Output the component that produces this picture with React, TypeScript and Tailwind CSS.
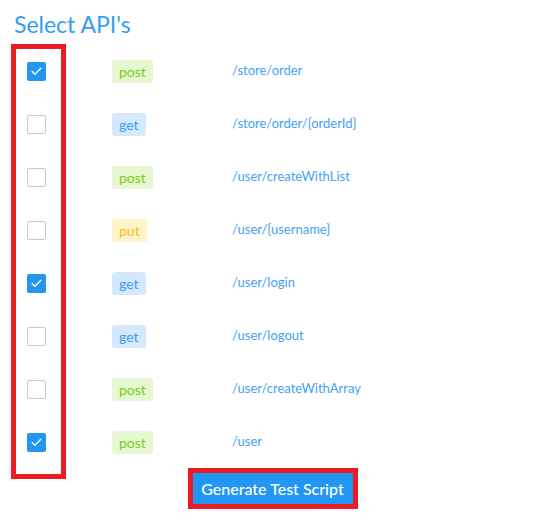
import { Check } from "lucide-react";

type Method = "get" | "post" | "put";

interface ApiRow {
  method: Method;
  path: string;
  checked: boolean;
}

const rows: ApiRow[] = [
  { method: "post", path: "/store/order", checked: true },
  { method: "get", path: "/store/order/{orderId}", checked: false },
  { method: "post", path: "/user/createWithList", checked: false },
  { method: "put", path: "/user/{username}", checked: false },
  { method: "get", path: "/user/login", checked: true },
  { method: "get", path: "/user/logout", checked: false },
  { method: "post", path: "/user/createWithArray", checked: false },
  { method: "post", path: "/user", checked: true },
];

const badgeStyles: Record<Method, string> = {
  get: "bg-[#d4e9fc] text-[#3a9cf2]",
  post: "bg-[#e6f7d2] text-[#7ccb1c]",
  put: "bg-[#fff3c9] text-[#f5bf1f]",
};

export default function App() {
  return (
    <div className="w-[545px] h-[523px] bg-white font-['Lato',sans-serif] overflow-hidden">
      <h1 className="pl-[14px] pt-[10px] h-[44px] text-[23px] leading-[28px] text-[#349ef3]">Select API's</h1>

      <div className="relative">
        {/* api rows */}
        <div className="flex flex-col">
          {rows.map((r, i) => (
            <div key={i} className="h-[53px] flex items-center">
              <div className="w-[112px] pl-[27px] pt-[2px] flex items-center">
                {r.checked ? (
                  <span className="w-[19px] h-[19px] rounded-[2px] bg-[#2196f3] flex items-center justify-center">
                    <Check className="w-[13px] h-[13px] text-white" strokeWidth={2.5} />
                  </span>
                ) : (
                  <span className="w-[19px] h-[19px] rounded-[2px] bg-white border border-[#c9c9c9]" />
                )}
              </div>
              <div className="w-[120px]">
                <span className={`inline-block px-[7px] h-[23px] leading-[23px] rounded-[3px] text-[14px] ${badgeStyles[r.method]}`}>
                  {r.method}
                </span>
              </div>
              <span className="text-[13px] text-[#43a3f5]">{r.path}</span>
            </div>
          ))}
        </div>

        {/* highlight box around checkbox column */}
        <div className="absolute left-[11px] top-0 w-[55px] h-[435px] border-[5px] border-[#ed1c24] pointer-events-none" />
      </div>

      <div className="flex justify-center">
        <div className="border-[5px] border-[#ed1c24]">
          <button className="w-[160px] h-[31px] bg-[#2196f3] text-white text-[16px] font-medium">
            Generate Test Script
          </button>
        </div>
      </div>
    </div>
  );
}
